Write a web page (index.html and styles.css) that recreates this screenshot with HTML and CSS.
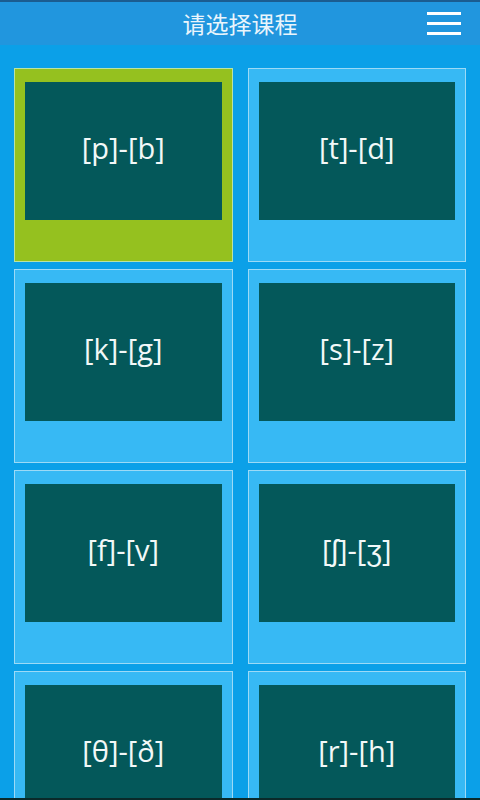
FILE: index.html
```html
<!DOCTYPE html>
<html lang="zh-CN">
<head>
<meta charset="utf-8">
<title>请选择课程</title>
<link rel="stylesheet" href="styles.css">
</head>
<body>

<div class="header">
    <div class="title">请选择课程</div>
    <button class="menu" title="菜单">
        <span></span><span></span><span></span>
    </button>
</div>

<div class="grid">
    <div class="card active"><div class="face">[p]-[b]</div></div>
    <div class="card"><div class="face">[t]-[d]</div></div>
    <div class="card"><div class="face">[k]-[g]</div></div>
    <div class="card"><div class="face">[s]-[z]</div></div>
    <div class="card"><div class="face">[f]-[v]</div></div>
    <div class="card"><div class="face">[ʃ]-[ʒ]</div></div>
    <div class="card"><div class="face">[θ]-[ð]</div></div>
    <div class="card"><div class="face">[r]-[h]</div></div>
</div>

<div class="edge"></div>

</body>
</html>
```

FILE: styles.css
```css
body {
    margin: 0;
    height: 800px;
    overflow: hidden;
    background-color: #0ba0e8;
    font-family: "Open Sans", "Liberation Sans", "Noto Sans CJK SC", sans-serif;
}
.header {
    height: 43px;
    border-top: 2px solid #1b5c90;
    background-color: #2196de;
    display: flex;
    align-items: center;
    justify-content: center;
    position: relative;
}
.title {
    color: #eaf5fc;
    font-size: 23px;
    font-family: "Noto Sans CJK SC", sans-serif;
    margin-top: -2px;
}
.menu {
    position: absolute;
    right: 19px;
    top: 10px;
    width: 34px;
    padding: 0;
    border: none;
    background: none;
    display: flex;
    flex-direction: column;
    gap: 7px;
}
.menu span {
    display: block;
    height: 3px;
    background-color: #fff;
}
.grid {
    display: grid;
    grid-template-columns: 1fr 1fr;
    column-gap: 15px;
    row-gap: 7px;
    padding: 23px 14px 0 14px;
}
.card {
    height: 179px;
    border: 1px solid #9cdaf6;
    background-color: #37b9f4;
    padding: 13px 10px 0 10px;
}
.card.active {
    background-color: #95c11f;
    border-color: #b9e3a6;
}
.face {
    height: 130px;
    padding-bottom: 8px;
    background-color: #04585a;
    color: #f2f8f8;
    font-size: 29px;
    display: flex;
    align-items: center;
    justify-content: center;
}
.edge {
    position: fixed;
    left: 0;
    right: 0;
    bottom: 0;
    height: 2px;
    background-color: #0a2a2a;
}
```
